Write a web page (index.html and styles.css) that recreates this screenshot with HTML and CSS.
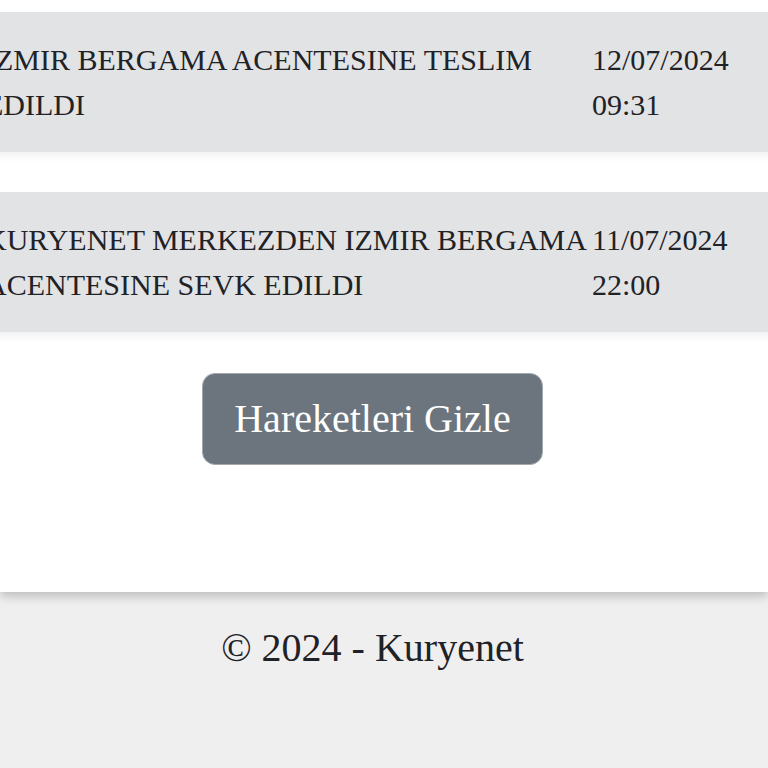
FILE: index.html
```html
<!DOCTYPE html>
<html lang="tr">
<head>
<meta charset="utf-8">
<title>Kuryenet</title>
<link rel="stylesheet" href="styles.css">
</head>
<body>
<main class="card">
  <div class="moves">
    <div class="move">
      <div class="move-desc">IZMIR BERGAMA ACENTESINE TESLIM EDILDI</div>
      <div class="move-date">12/07/2024<br>09:31</div>
    </div>
    <div class="move">
      <div class="move-desc">KURYENET MERKEZDEN IZMIR BERGAMA ACENTESINE SEVK EDILDI</div>
      <div class="move-date">11/07/2024<br>22:00</div>
    </div>
  </div>
  <div class="actions">
    <button class="btn-toggle" type="button">Hareketleri Gizle</button>
  </div>
</main>
<footer class="footer">© 2024 - Kuryenet</footer>
</body>
</html>
```
FILE: styles.css
```css
html, body {
  margin: 0;
  padding: 0;
}
body {
  background: #efefef;
  font-family: "Liberation Serif", "Times New Roman", serif;
  color: #1f2226;
  overflow: hidden;
  width: 768px;
  height: 768px;
}
.card {
  background: #ffffff;
  height: 592px;
  box-shadow: 0 4px 10px rgba(0, 0, 0, 0.22);
  position: relative;
  z-index: 1;
  padding-top: 12px;
  box-sizing: border-box;
  overflow: hidden;
}
.moves {
  display: flex;
  flex-direction: column;
  gap: 40px;
  margin-left: -40px;
  margin-right: -60px;
}
.move {
  display: flex;
  background: #e2e3e5;
  padding: 25px 0 25px 25px;
  font-size: 30px;
  line-height: 45px;
  box-shadow: 0 5px 8px rgba(0, 0, 0, 0.05);
}
.move-desc {
  width: 607px;
  flex: none;
}
.move-date {
  flex: none;
}
.actions {
  display: flex;
  justify-content: center;
  padding-right: 23px;
  margin-top: 41px;
}
.btn-toggle {
  font-family: "Liberation Serif", "Times New Roman", serif;
  font-size: 40px;
  line-height: 60px;
  color: #ffffff;
  background: #6c757d;
  border: 1.5px solid #a3a8ad;
  border-radius: 13px;
  padding: 15px 31px;
  margin: 0;
}
.footer {
  text-align: center;
  padding-right: 23px;
  padding-top: 26px;
  font-size: 40px;
  line-height: 60px;
  color: #1f2226;
}
```
